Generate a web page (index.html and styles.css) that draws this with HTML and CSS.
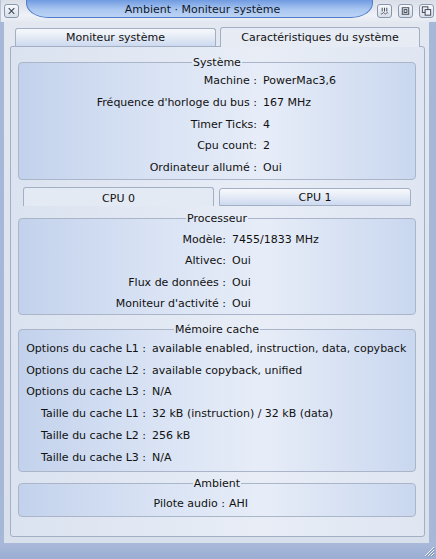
FILE: index.html
```
<!DOCTYPE html>
<html lang="fr">
<head>
<meta charset="utf-8">
<title>Ambient · Moniteur système</title>
<link rel="stylesheet" href="styles.css">
</head>
<body>
<div class="window">
  <div class="titlebar">
    <div class="gadget close">
      <svg width="14" height="14" viewBox="0 0 14 14"><path d="M4 4 L10 10 M10 4 L4 10" stroke="#3a4050" stroke-width="1.1" fill="none"/></svg>
    </div>
    <div class="title-shape"><span class="title-text">Ambient · Moniteur système</span></div>
    <div class="gadgets">
      <div class="gadget">
        <svg width="14" height="14" viewBox="0 0 14 14"><path d="M4.5 3.5 V7.5 M7 3.5 V7.5 M9.5 3.5 V7.5" stroke="#3a4050" stroke-width="1" fill="none"/><path d="M3 9.5 Q4 11 5 9.5 T7 9.5 T9 9.5 T11 9.5" stroke="#3a4050" stroke-width="0.9" fill="none"/></svg>
      </div>
      <div class="gadget">
        <svg width="14" height="14" viewBox="0 0 14 14"><rect x="3.5" y="3.5" width="7" height="7" stroke="#3a4050" stroke-width="1" fill="none"/><rect x="5.5" y="5.5" width="3" height="3" stroke="#3a4050" stroke-width="1" fill="none"/></svg>
      </div>
      <div class="gadget">
        <svg width="14" height="14" viewBox="0 0 14 14"><rect x="2.5" y="2.5" width="6" height="6" stroke="#3a4050" stroke-width="1" fill="none"/><rect x="5.5" y="5.5" width="6" height="6" stroke="#3a4050" stroke-width="1" fill="#eef2f8"/></svg>
      </div>
    </div>
  </div>

  <div class="body">
    <div class="tabs">
      <div class="tab inactive tab-main1">Moniteur système</div>
      <div class="tab active tab-main2">Caractéristiques du système</div>
    </div>
    <div class="panel">
      <fieldset class="group g-sys">
        <legend>Système</legend>
        <div class="rows">
          <span class="lbl">Machine :</span><span class="val">PowerMac3,6</span>
          <span class="lbl">Fréquence d'horloge du bus :</span><span class="val">167 MHz</span>
          <span class="lbl">Timer Ticks:</span><span class="val">4</span>
          <span class="lbl">Cpu count:</span><span class="val">2</span>
          <span class="lbl">Ordinateur allumé :</span><span class="val">Oui</span>
        </div>
      </fieldset>

      <div class="subtabs">
        <div class="tab active tab-cpu0">CPU 0</div>
        <div class="tab inactive sub-inactive tab-cpu1">CPU 1</div>
      </div>
      <fieldset class="group g-cpu">
        <legend>Processeur</legend>
        <div class="rows">
          <span class="lbl">Modèle:</span><span class="val">7455/1833 MHz</span>
          <span class="lbl">Altivec:</span><span class="val">Oui</span>
          <span class="lbl">Flux de données :</span><span class="val">Oui</span>
          <span class="lbl">Moniteur d'activité :</span><span class="val">Oui</span>
        </div>
      </fieldset>

      <fieldset class="group g-cache">
        <legend>Mémoire cache</legend>
        <div class="rows">
          <span class="lbl">Options du cache L1 :</span><span class="val">available enabled, instruction, data, copyback</span>
          <span class="lbl">Options du cache L2 :</span><span class="val">available copyback, unified</span>
          <span class="lbl">Options du cache L3 :</span><span class="val">N/A</span>
          <span class="lbl">Taille du cache L1 :</span><span class="val">32 kB (instruction) / 32 kB (data)</span>
          <span class="lbl">Taille du cache L2 :</span><span class="val">256 kB</span>
          <span class="lbl">Taille du cache L3 :</span><span class="val">N/A</span>
        </div>
      </fieldset>

      <fieldset class="group g-amb">
        <legend>Ambient</legend>
        <div class="rows">
          <span class="lbl">Pilote audio :</span><span class="val">AHI</span>
        </div>
      </fieldset>
    </div>
  </div>

  <div class="bottom-frame">
    <svg class="grip" width="12" height="12" viewBox="0 0 12 12"><path d="M11 2 L2 11 M11 5 L5 11 M11 8 L8 11" stroke="#f2f5fa" stroke-width="1" fill="none"/><path d="M11.5 3 L3 11.5 M11.5 6 L6 11.5 M11.5 9 L9 11.5" stroke="#6f80a4" stroke-width="0.8" fill="none"/></svg>
  </div>
</div>
</body>
</html>
```
FILE: styles.css
```
* { box-sizing: border-box; }
html, body { margin: 0; padding: 0; }
body {
  width: 436px;
  height: 559px;
  overflow: hidden;
  font-family: "DejaVu Sans", "Liberation Sans", sans-serif;
  font-size: 11px;
  color: #111;
  background: #a6b7d8;
}
.window {
  width: 436px;
  height: 559px;
  display: flex;
  flex-direction: column;
  background: #a6b7d8;
}

/* Title bar */
.titlebar {
  height: 22px;
  display: flex;
  align-items: flex-start;
  background: linear-gradient(#d9dee7, #eef1f6 70%, #e4e9f1);
  border-left: 1px solid #b8c4da;
  padding-left: 3px;
}
.gadget {
  width: 15px;
  height: 14px;
  margin-top: 4px;
  border: 1px solid #8896ae;
  border-radius: 3px;
  background: linear-gradient(#f7f9fc, #d8dfea);
  display: flex;
  align-items: center;
  justify-content: center;
}
.gadget svg { display: block; }
.title-shape {
  width: 347px;
  height: 18px;
  margin-left: 7px;
  background: linear-gradient(#6f9ae0, #a9c6f1 55%, #bcd3f5);
  border: 1px solid #4f7ccb;
  border-top: none;
  border-radius: 0 0 22px 22px / 0 0 15px 15px;
  display: flex;
  align-items: flex-start;
  justify-content: center;
  padding-top: 3px;
}
.title-text {
  color: #101828;
  line-height: 13px;
  padding-left: 6px;
}
.gadgets {
  display: flex;
  gap: 6px;
  margin-left: 4px;
}

/* Body */
.body {
  flex: 1;
  margin: 0 7px 0 4px;
  padding: 5px 4px 6px 6px;
  background: linear-gradient(#e3e8f0, #d8e0ec);
  display: flex;
  flex-direction: column;
}
.tabs {
  height: 19px;
  display: flex;
  align-items: flex-end;
  gap: 4px;
  padding-left: 5px;
}
.tab {
  display: flex;
  align-items: center;
  justify-content: center;
  border: 1px solid #a3afc4;
  border-radius: 3px 3px 0 0;
  line-height: 13px;
}
.tab.active {
  height: 20px;
  margin-bottom: -1px;
  border-bottom: none;
  background: #e6ebf4;
  position: relative;
  z-index: 1;
  padding-bottom: 1px;
}
.tab.inactive {
  height: 18px;
  border-bottom: none;
  background: linear-gradient(#f6f8fc, #e6ecf6 45%, #ccd9ef);
}
.tab-main1 { width: 201px; }
.tab-main2 { width: 200px; }

.panel {
  flex: 1;
  width: 415px;
  border: 1px solid #a3afc4;
  border-radius: 2px 3px 3px 3px;
  background: linear-gradient(to right, #dbe3f0, #e8edf6 60%, #dfe6f2);
  padding: 9px 8px 0 7px;
  display: flex;
  flex-direction: column;
}

/* Group boxes */
.group {
  margin: 0;
  padding: 0;
  min-width: 0;
  border: 1px solid #aab5c9;
  border-radius: 4px;
  background: linear-gradient(to right, #c3d2ec, #d9e3f4 35%, #e7edf8 62%, #c9d7ef);
}
.group legend {
  margin: 0 auto;
  padding: 0 1px;
  line-height: 13px;
  height: 13px;
}
.rows {
  display: grid;
  column-gap: 6px;
  grid-auto-rows: 21.7px;
  align-items: center;
  padding-top: 1px;
}
.lbl { text-align: right; white-space: nowrap; }
.val { white-space: nowrap; }

.g-sys .rows { grid-template-columns: 238px auto; padding-bottom: 1px; }

.subtabs {
  height: 19px;
  margin-top: 7px;
  display: flex;
  align-items: flex-end;
  gap: 5px;
  padding-left: 5px;
}
.subtabs .tab.active {
  height: 19px;
  margin-bottom: 0;
  padding-top: 2px;
  padding-bottom: 0;
  background: #e4eaf4;
}
.sub-inactive.tab.inactive {
  height: 18px;
  border-bottom: 1px solid #a3afc4;
}
.tab-cpu0 { width: 191px; }
.tab-cpu1 { width: 192px; }

.g-cpu { margin-top: 6px; }
.g-cpu .rows { grid-template-columns: 207px auto; grid-auto-rows: 21.5px; padding-top: 3px; padding-bottom: 0; }

.g-cache { margin-top: 8px; }
.g-cache .rows { grid-template-columns: 127px auto; grid-auto-rows: 21.8px; padding-bottom: 3px; }

.g-amb { margin-top: 5px; }
.g-amb .rows { grid-template-columns: 206px auto; column-gap: 4px; padding-top: 2px; padding-bottom: 2px; }

/* Bottom frame */
.bottom-frame {
  height: 16px;
  background: linear-gradient(#a9b9da, #9aaed3);
  display: flex;
  justify-content: flex-end;
  align-items: flex-end;
  padding: 0 1px 2px 0;
}
.grip { display: block; }
```
